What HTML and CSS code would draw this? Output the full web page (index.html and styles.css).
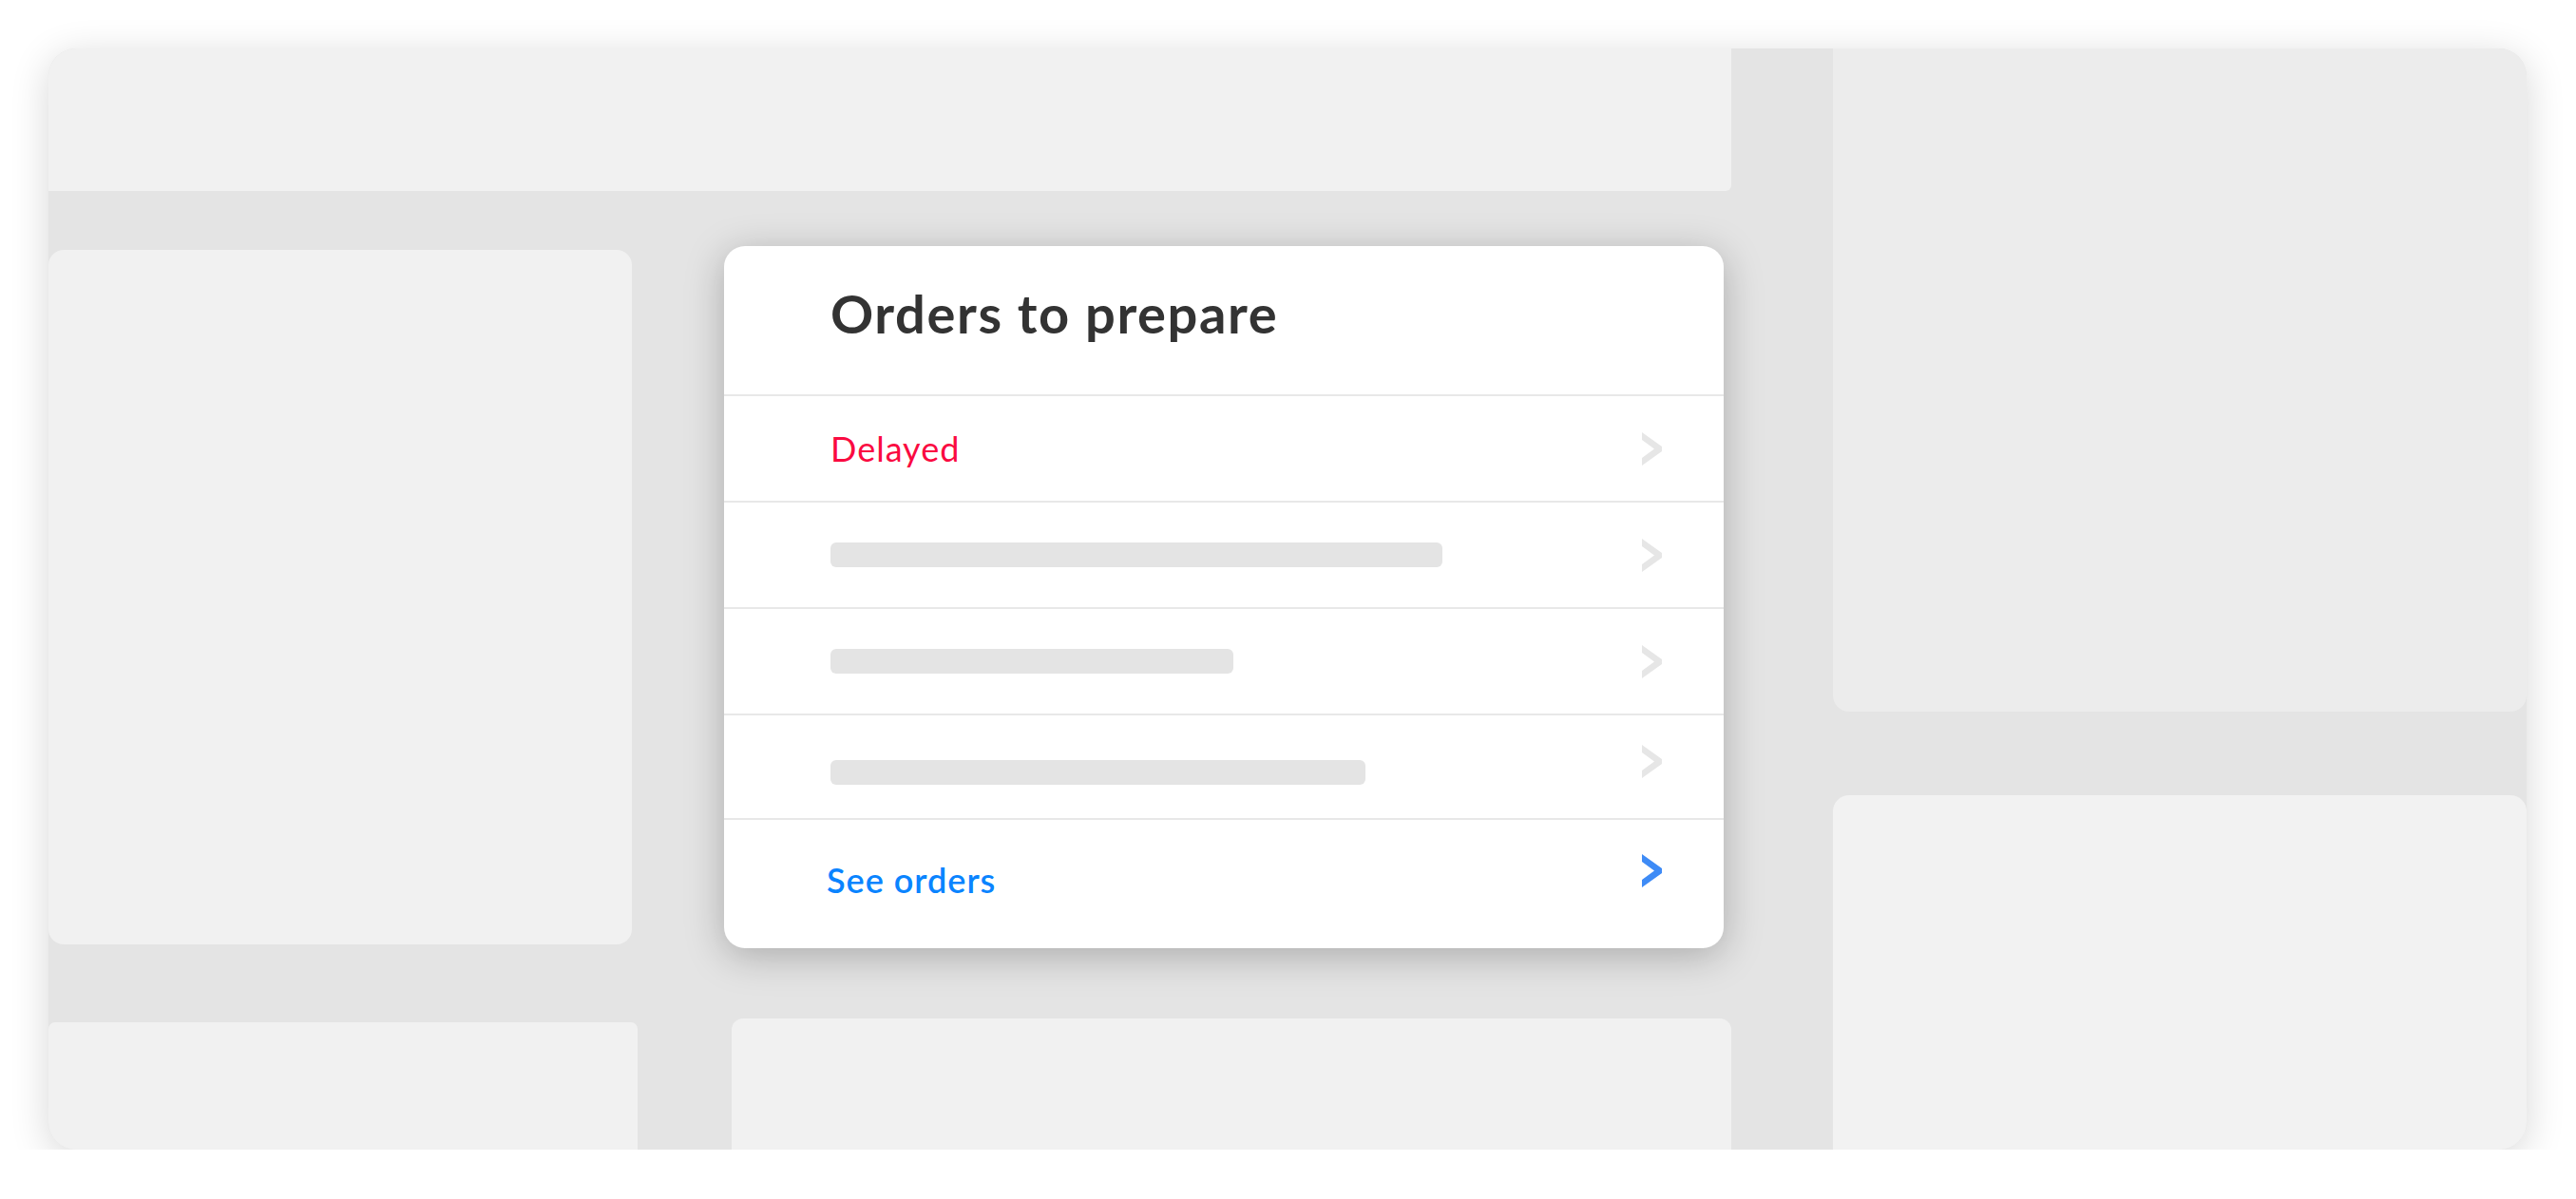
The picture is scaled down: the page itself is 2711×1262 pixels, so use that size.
FILE: index.html
```html
<!DOCTYPE html>
<html lang="en">
<head>
  <meta charset="UTF-8" />
  <meta name="viewport" content="width=device-width, initial-scale=1.0"/>
  <title>Orders to prepare</title>
  <link rel="stylesheet" href="styles.css">
</head>
<body>

  <div class="frame">
    <div class="main">
      <div class="block topbar"></div>

      <div class="middle">
        <div class="block side-card"></div>

        <section class="orders">
          <h1>Orders to prepare</h1>

          <a class="row" href="#">
            <span class="delayed">Delayed</span>
            <svg class="chevron" viewBox="0 0 21 35"><polygon points="0,0 21,15 21,20 0,35 0,27 13,17.5 0,8"/></svg>
          </a>
          <a class="row" href="#">
            <span class="skeleton" style="width: 644px"></span>
            <svg class="chevron" viewBox="0 0 21 35"><polygon points="0,0 21,15 21,20 0,35 0,27 13,17.5 0,8"/></svg>
          </a>
          <a class="row" href="#">
            <span class="skeleton" style="width: 424px"></span>
            <svg class="chevron" viewBox="0 0 21 35"><polygon points="0,0 21,15 21,20 0,35 0,27 13,17.5 0,8"/></svg>
          </a>
          <a class="row last" href="#">
            <span class="skeleton" style="width: 563px"></span>
            <svg class="chevron" viewBox="0 0 21 35"><polygon points="0,0 21,15 21,20 0,35 0,27 13,17.5 0,8"/></svg>
          </a>

          <a class="see-orders" href="#">
            <span>See orders</span>
            <svg class="chevron blue" viewBox="0 0 21 35"><polygon points="0,0 21,15 21,20 0,35 0,27 13,17.5 0,8"/></svg>
          </a>
        </section>
      </div>

      <div class="bottom">
        <div class="block bottom-left"></div>
        <div class="block bottom-mid"></div>
      </div>
    </div>

    <div class="aside">
      <div class="block aside-top"></div>
      <div class="block aside-bottom"></div>
    </div>
  </div>

</body>
</html>
```

FILE: styles.css
```css
* {
  margin: 0;
  padding: 0;
  box-sizing: border-box;
}

body {
  font-family: 'Lato', 'Liberation Sans', sans-serif;
  background: #ffffff;
  padding: 51px 52px 0 51px;
}

.frame {
  display: flex;
  gap: 107px;
  height: 1159px;
  background: #e4e4e4;
  border-radius: 29px;
  overflow: hidden;
  box-shadow: 0 8px 40px rgba(0,0,0,0.16);
}

.block {
  background: #f1f1f1;
}

/* left + middle part */
.main {
  width: 1771px;
  display: flex;
  flex-direction: column;
}

.topbar {
  height: 150px;
  border-bottom-right-radius: 6px;
}

.middle {
  display: flex;
  align-items: flex-start;
  gap: 97px;
  margin-top: 58px;
}

.side-card {
  width: 614px;
  height: 731px;
  margin-top: 4px;
  border-radius: 16px;
}

.bottom {
  flex: 1;
  display: flex;
  gap: 99px;
  margin-top: 74px;
}

.bottom-left {
  width: 620px;
  margin-top: 4px;
  border-radius: 7px 7px 0 0;
}

.bottom-mid {
  width: 1052px;
  border-radius: 12px 12px 0 0;
}

/* right column */
.aside {
  flex: 1;
  display: flex;
  flex-direction: column;
  gap: 88px;
}

.aside-top {
  height: 698px;
  background: #ececec;
  border-radius: 0 0 17px 17px;
}

.aside-bottom {
  flex: 1;
  background: #f2f2f2;
  border-radius: 17px 17px 0 0;
}

/* the orders card */
.orders {
  width: 1052px;
  height: 739px;
  background: #ffffff;
  border-radius: 22px;
  box-shadow: 0 8px 40px rgba(0,0,0,0.25);
  display: flex;
  flex-direction: column;
}

.orders h1 {
  height: 156px;
  padding: 43px 0 0 112px;
  font-size: 56px;
  line-height: 1;
  font-weight: 700;
  letter-spacing: 1.6px;
  color: #333333;
}

.row {
  height: 112px;
  border-top: 2px solid #e8e8e8;
  display: flex;
  align-items: center;
  justify-content: space-between;
  padding: 0 65px 0 112px;
  text-decoration: none;
}

.row.last {
  height: 110px;
}

.row.last .skeleton {
  margin-top: 12px;
}

.row.last .chevron {
  margin-bottom: 12px;
}

.delayed {
  font-size: 36px;
  letter-spacing: 1px;
  color: #fa0a41;
}

.skeleton {
  display: block;
  height: 26px;
  border-radius: 6px;
  background: #e4e4e4;
}

.chevron {
  width: 21px;
  height: 35px;
  fill: #e6e6e6;
}

.chevron.blue {
  fill: #3e8bf6;
  margin-bottom: 18px;
}

.see-orders {
  flex: 1;
  border-top: 2px solid #e8e8e8;
  display: flex;
  align-items: center;
  justify-content: space-between;
  padding: 0 65px 10px 108px;
  text-decoration: none;
  font-size: 36px;
  font-weight: 600;
  letter-spacing: 1px;
  color: #0a84ff;
}
```
